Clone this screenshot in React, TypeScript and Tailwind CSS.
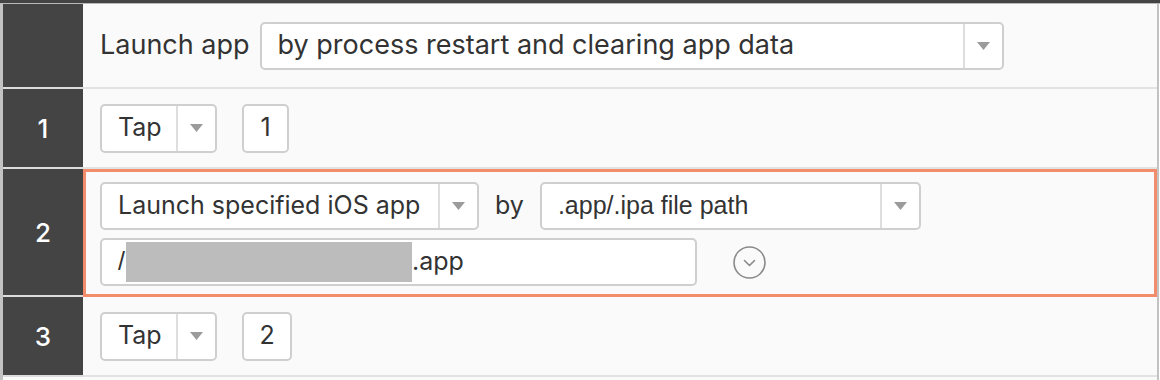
import type { ReactNode } from "react";
import clsx from "clsx";

function Caret() {
  return (
    <svg width="13" height="8" viewBox="0 0 13 8" aria-hidden>
      <polygon points="0,0 13,0 6.5,8" fill="#9b9b9b" />
    </svg>
  );
}

function Select({ className, children }: { className: string; children: ReactNode }) {
  return (
    <div className={clsx("flex items-stretch rounded-[5px] border-2 border-[#cfcfcf] bg-white", className)}>
      <div className="flex flex-1 items-center pl-4 whitespace-nowrap">{children}</div>
      <div className="flex w-[39px] items-center justify-center border-l-2 border-[#dedede]">
        <Caret />
      </div>
    </div>
  );
}

function NumberBox({ className, value }: { className: string; value: string }) {
  return (
    <div
      className={clsx(
        "flex h-[49px] items-center justify-center rounded-[5px] border-2 border-[#cfcfcf] bg-white",
        className
      )}
    >
      {value}
    </div>
  );
}

function StepCell({ label, className }: { label?: string; className: string }) {
  return (
    <div
      className={clsx(
        "flex w-[80px] shrink-0 items-center justify-center border-b-2 border-[#dcdcdc] bg-[#444444] text-[26px] font-medium text-white",
        className
      )}
    >
      {label}
    </div>
  );
}

export default function App() {
  return (
    <div className="h-[380px] w-[1160px] overflow-hidden bg-white font-['Inter',sans-serif] text-[25px] text-[#333333]">
      <div className="h-[3px] bg-[#444444]" />
      <div className="h-px bg-[#b9b9b9]" />
      <div className="w-[1159px] border-r-2 border-l-[3px] border-[#c2c2c2] bg-[#fafafa]">
        {/* launch settings */}
        <div className="flex">
          <StepCell className="h-[85px]" />
          <div className="flex h-[85px] flex-1 items-center gap-[10px] border-b-2 border-[#e2e2e2] pl-[17px] text-[27px]">
            <span>Launch app</span>
            <Select className="h-[48px] w-[744px]">by process restart and clearing app data</Select>
          </div>
        </div>

        {/* step 1 */}
        <div className="flex">
          <StepCell label="1" className="h-[80px]" />
          <div className="flex h-[80px] flex-1 items-center gap-[25px] border-b-2 border-[#e2e2e2] pl-[17px]">
            <Select className="h-[49px] w-[117px]">Tap</Select>
            <NumberBox className="w-[47px]" value="1" />
          </div>
        </div>

        {/* step 2 */}
        <div className="flex">
          <StepCell label="2" className="h-[128px]" />
          <div className="flex h-[128px] flex-1 flex-col gap-[8px] border-[3px] border-[#f28c6b] pt-[10px] pl-[14px]">
            <div className="flex items-center">
              <Select className="h-[48px] w-[379px]">Launch specified iOS app</Select>
              <span className="mx-[16px]">by</span>
              <Select className="h-[48px] w-[381px] font-['Liberation_Sans',sans-serif]">
                .app/.ipa file path
              </Select>
            </div>
            <div className="flex items-center gap-[36px]">
              <div className="flex h-[48px] w-[597px] items-center rounded-[5px] border-2 border-[#cfcfcf] bg-white pl-4">
                <span className="font-['Liberation_Sans',sans-serif]">/</span>
                <span className="ml-[1px] h-[40px] w-[286px] bg-[#bcbcbc]" />
                <span>.app</span>
              </div>
              <svg width="33" height="33" viewBox="0 0 33 33" aria-hidden>
                <circle cx="16.5" cy="16.5" r="15.5" fill="none" stroke="#8a8a8a" strokeWidth="1.6" />
                <polyline
                  points="11.5,14.5 16.5,19.5 21.5,14.5"
                  fill="none"
                  stroke="#8a8a8a"
                  strokeWidth="1.6"
                  strokeLinecap="round"
                  strokeLinejoin="round"
                />
              </svg>
            </div>
          </div>
        </div>

        {/* step 3 */}
        <div className="flex">
          <StepCell label="3" className="h-[80px]" />
          <div className="flex h-[80px] flex-1 items-center gap-[25px] border-b-2 border-[#e2e2e2] pl-[17px]">
            <Select className="h-[49px] w-[117px]">Tap</Select>
            <NumberBox className="w-[50px]" value="2" />
          </div>
        </div>
        <div className="h-[10px]" />
      </div>
    </div>
  );
}
